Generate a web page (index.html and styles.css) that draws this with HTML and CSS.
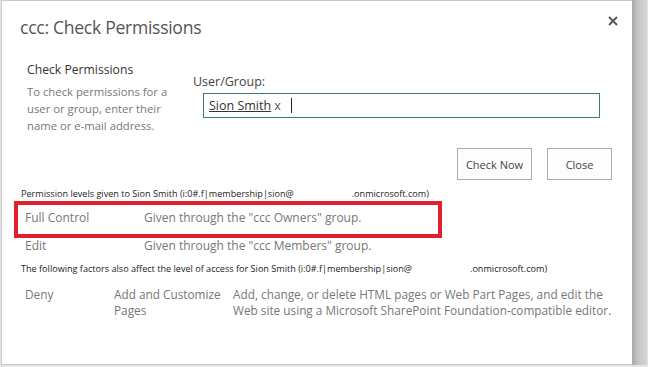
FILE: index.html
```html
<!DOCTYPE html>
<html lang="en">
<head>
    <meta charset="UTF-8">
    <title>ccc: Check Permissions</title>
    <link rel="stylesheet" href="styles.css">
</head>
<body>
    <div class="page">
        <div class="dialog">
            <!-- Title bar -->
            <div class="head">
                <h1>ccc: Check Permissions</h1>
                <svg class="close-x" width="10" height="10" viewBox="0 0 10 10">
                    <path d="M1 1 L9 9 M9 1 L1 9" stroke="#555" stroke-width="1.8" fill="none"/>
                </svg>
            </div>

            <!-- Form -->
            <div class="form">
                <div class="intro">
                    <h2>Check Permissions</h2>
                    <p>To check permissions for a user or group, enter their name or e-mail address.</p>
                </div>
                <div class="field">
                    <label for="who">User/Group:</label>
                    <div class="picker" id="who">
                        <span class="entity">Sion Smith</span><span class="remove">x</span><span class="caret"></span>
                    </div>
                </div>
            </div>

            <div class="actions">
                <button class="btn-check">Check Now</button>
                <button class="btn-close">Close</button>
            </div>

            <!-- Results -->
            <p class="note">Permission levels given to Sion Smith (i:0#.f|membership|sion@<span class="gap"></span>.onmicrosoft.com)</p>
            <div class="levels">
                <div class="row">
                    <span class="name">Full Control</span>
                    <span class="desc">Given through the "ccc Owners" group.</span>
                </div>
                <div class="row">
                    <span class="name">Edit</span>
                    <span class="desc">Given through the "ccc Members" group.</span>
                </div>
                <div class="highlight"></div>
            </div>

            <p class="note">The following factors also affect the level of access for Sion Smith (i:0#.f|membership|sion@<span class="gap"></span>.onmicrosoft.com)</p>
            <div class="factor">
                <span class="f-type">Deny</span>
                <span class="f-perm">Add and Customize Pages</span>
                <span class="f-desc">Add, change, or delete HTML pages or Web Part Pages, and edit the Web site using a Microsoft SharePoint Foundation-compatible editor.</span>
            </div>
        </div>
        <div class="shade"></div>
    </div>
</body>
</html>
```

FILE: styles.css
```css
html, body {
    margin: 0;
    padding: 0;
}
body {
    width: 648px;
    height: 367px;
    overflow: hidden;
    background: #e4e4e4;
    font-family: "Open Sans", "Noto Sans", sans-serif;
}
.page {
    display: flex;
    height: 365px;
}
.dialog {
    position: relative;
    width: 631px;
    box-sizing: border-box;
    background: #fff;
    border: 1px solid #c8c8c8;
    border-right: none;
    margin-left: 1px;
    padding: 0 0 0 18px;
}
.shade {
    width: 15px;
    background: linear-gradient(to right, #a9a9a9, #c4c4c4 40%, #d6d6d6);
}
.head {
    display: flex;
    justify-content: space-between;
    align-items: flex-start;
    padding-right: 14px;
}
h1 {
    margin: 14px 0 0;
    font-size: 17.6px;
    font-weight: 400;
    letter-spacing: -0.3px;
    color: #555;
}
.close-x {
    margin-top: 15px;
}
.form {
    display: flex;
    margin-top: 22px;
}
.intro {
    width: 165px;
    padding-left: 7px;
}
h2 {
    margin: 0;
    font-size: 12.2px;
    font-weight: 400;
    color: #333;
}
.intro p {
    width: 142px;
    margin: 5px 0 0;
    font-size: 11.3px;
    line-height: 17px;
    color: #777;
}
.field {
    flex: 1;
}
label {
    display: block;
    margin: 12px 0 3px 1px;
    font-size: 12.5px;
    color: #444;
}
.picker {
    display: flex;
    align-items: center;
    width: 397px;
    height: 25px;
    box-sizing: border-box;
    margin-left: 11px;
    padding-left: 5px;
    border: 1px solid #3d7b78;
    font-size: 12.5px;
    color: #333;
}
.entity {
    text-decoration: underline;
}
.remove {
    margin-left: 3px;
    color: #555;
}
.caret {
    width: 1px;
    height: 15px;
    margin-left: 10px;
    background: #222;
}
.actions {
    display: flex;
    justify-content: flex-end;
    gap: 15px;
    margin: 14px 20px 0 0;
}
button {
    height: 32px;
    padding: 0;
    border: 1px solid #ababab;
    background: #fdfdfd;
    font-family: inherit;
    font-size: 11px;
    color: #444;
}
.btn-check {
    width: 75px;
}
.btn-close {
    width: 65px;
}
.note {
    margin: 7px 0 0 1px;
    font-size: 9.1px;
    color: #222;
}
.gap {
    display: inline-block;
    width: 58px;
}
.levels {
    position: relative;
    margin-top: 1px;
}
.row {
    display: flex;
    padding: 8px 0 0 5px;
    height: 18px;
    font-size: 12px;
    color: #777;
}
.row + .row {
    margin-top: 2px;
}
.name {
    width: 119px;
}
.highlight {
    position: absolute;
    left: -6px;
    top: 0;
    width: 428px;
    height: 37px;
    box-sizing: border-box;
    border: 4px solid #e0202a;
}
.factor {
    display: flex;
    margin-top: 11px;
    padding-left: 5px;
    font-size: 11.8px;
    line-height: 16px;
    color: #777;
}
.f-type {
    width: 89px;
}
.f-perm {
    width: 119px;
}
.f-desc {
    width: 385px;
}
```
